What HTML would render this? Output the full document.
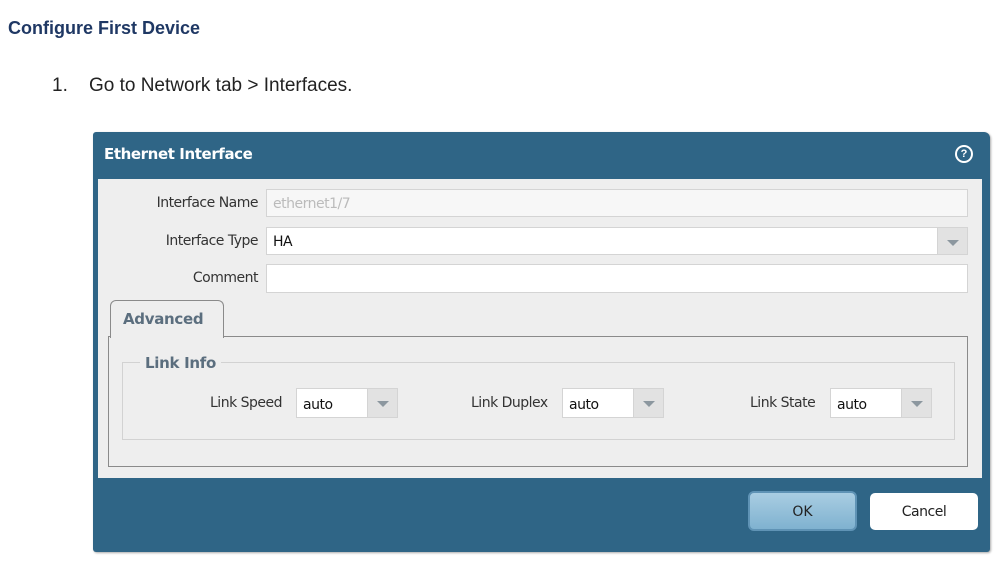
<!DOCTYPE html><html><head><style>
body{margin:0;width:999px;height:564px;background:#fff;position:relative;font-family:"Liberation Sans",sans-serif;overflow:hidden}
.a{position:absolute}
.lbl{font-family:"DejaVu Sans",sans-serif;font-size:14px;color:#333;letter-spacing:-0.5px}
.inp{background:#fff;border:1px solid #d4d4d4;box-sizing:border-box}
.dd{background:#fff;border:1px solid #d4d4d4;box-sizing:border-box;font-family:"DejaVu Sans",sans-serif;font-size:14px;color:#111;padding:6px 0 0 6px;letter-spacing:-0.5px}
.btn{position:absolute;right:0;top:0;bottom:0;width:29px;background:#e2e2e2;border-left:1px solid #d4d4d4}
.btn:after{content:"";position:absolute;left:9px;top:12px;border-left:6px solid transparent;border-right:6px solid transparent;border-top:6px solid #8c979f}
</style></head><body>
<div class="a" style="left:8px;top:18px;font-size:18px;font-weight:bold;color:#1f3864">Configure First Device</div>
<div class="a" style="left:52px;top:75px;font-size:19px;color:#222">1.&nbsp;&nbsp;&nbsp;&nbsp;Go to Network tab &gt; Interfaces.</div>
<div class="a" style="left:93px;top:132px;width:897px;height:420px;background:#2f6586;border-radius:3px 6px 3px 3px;box-shadow:1px 1px 2px #aaa"></div>
<div class="a" style="left:104px;top:145px;font-family:'DejaVu Sans',sans-serif;font-weight:bold;font-size:15px;color:#fff;letter-spacing:-0.4px">Ethernet Interface</div>
<div class="a" style="left:955px;top:145px;width:18px;height:18px;border-radius:50%;background:#fff;"><div style="position:absolute;left:2px;top:2px;width:14px;height:14px;border-radius:50%;background:#2f6586;color:#fff;font-weight:bold;font-size:11px;text-align:center;line-height:14px">?</div></div>
<div class="a" style="left:98px;top:179px;width:884px;height:299px;background:#eeeeee"></div>
<div class="a lbl" style="right:741px;top:195px">Interface Name</div>
<div class="a inp" style="left:266px;top:189px;width:702px;height:28px;background:#f7f7f7;font-family:'DejaVu Sans';font-size:14px;color:#bbb;padding:6px 0 0 6px;letter-spacing:-0.5px">ethernet1/7</div>
<div class="a lbl" style="right:741px;top:233px">Interface Type</div>
<div class="a dd" style="left:266px;top:227px;width:702px;height:28px">HA<div class="btn"></div></div>
<div class="a lbl" style="right:741px;top:270px">Comment</div>
<div class="a inp" style="left:266px;top:264px;width:702px;height:29px"></div>
<div class="a" style="left:108px;top:336px;width:860px;height:131px;border:1px solid #8a8a8a;box-sizing:border-box"></div>
<div class="a" style="left:110px;top:300px;width:114px;height:38px;border:1px solid #8a8a8a;border-bottom:none;border-radius:6px 6px 0 0;background:#eeeeee;box-sizing:border-box"></div>
<div class="a" style="left:123px;top:310px;font-family:'DejaVu Sans';font-weight:bold;font-size:15px;color:#5b6e7e;letter-spacing:-0.3px">Advanced</div>
<div class="a" style="left:122px;top:362px;width:833px;height:78px;border:1px solid #d2d2d2;box-sizing:border-box"></div>
<div class="a" style="left:140px;top:354px;padding:0 5px;background:#eee;font-family:'DejaVu Sans';font-weight:bold;font-size:15px;color:#5b6e7e;letter-spacing:-0.3px">Link Info</div>
<div class="a lbl" style="left:210px;top:395px">Link Speed</div>
<div class="a dd" style="left:296px;top:388px;width:102px;height:30px;padding-top:8px">auto<div class="btn"></div></div>
<div class="a lbl" style="left:471px;top:395px">Link Duplex</div>
<div class="a dd" style="left:562px;top:388px;width:102px;height:30px;padding-top:8px">auto<div class="btn"></div></div>
<div class="a lbl" style="left:750px;top:395px">Link State</div>
<div class="a dd" style="left:830px;top:388px;width:102px;height:30px;padding-top:8px">auto<div class="btn"></div></div>
<div class="a" style="left:748px;top:491px;width:109px;height:40px;border-radius:6px;background:linear-gradient(#a9cde2,#7fb2d0);border:2px solid #5f93b5;box-sizing:border-box;text-align:center;line-height:38px;font-family:'DejaVu Sans';font-size:14px;color:#222">OK</div>
<div class="a" style="left:870px;top:493px;width:108px;height:37px;border-radius:5px;background:#fff;text-align:center;line-height:38px;font-family:'DejaVu Sans';font-size:14px;color:#222;letter-spacing:-0.5px">Cancel</div>
</body></html>
